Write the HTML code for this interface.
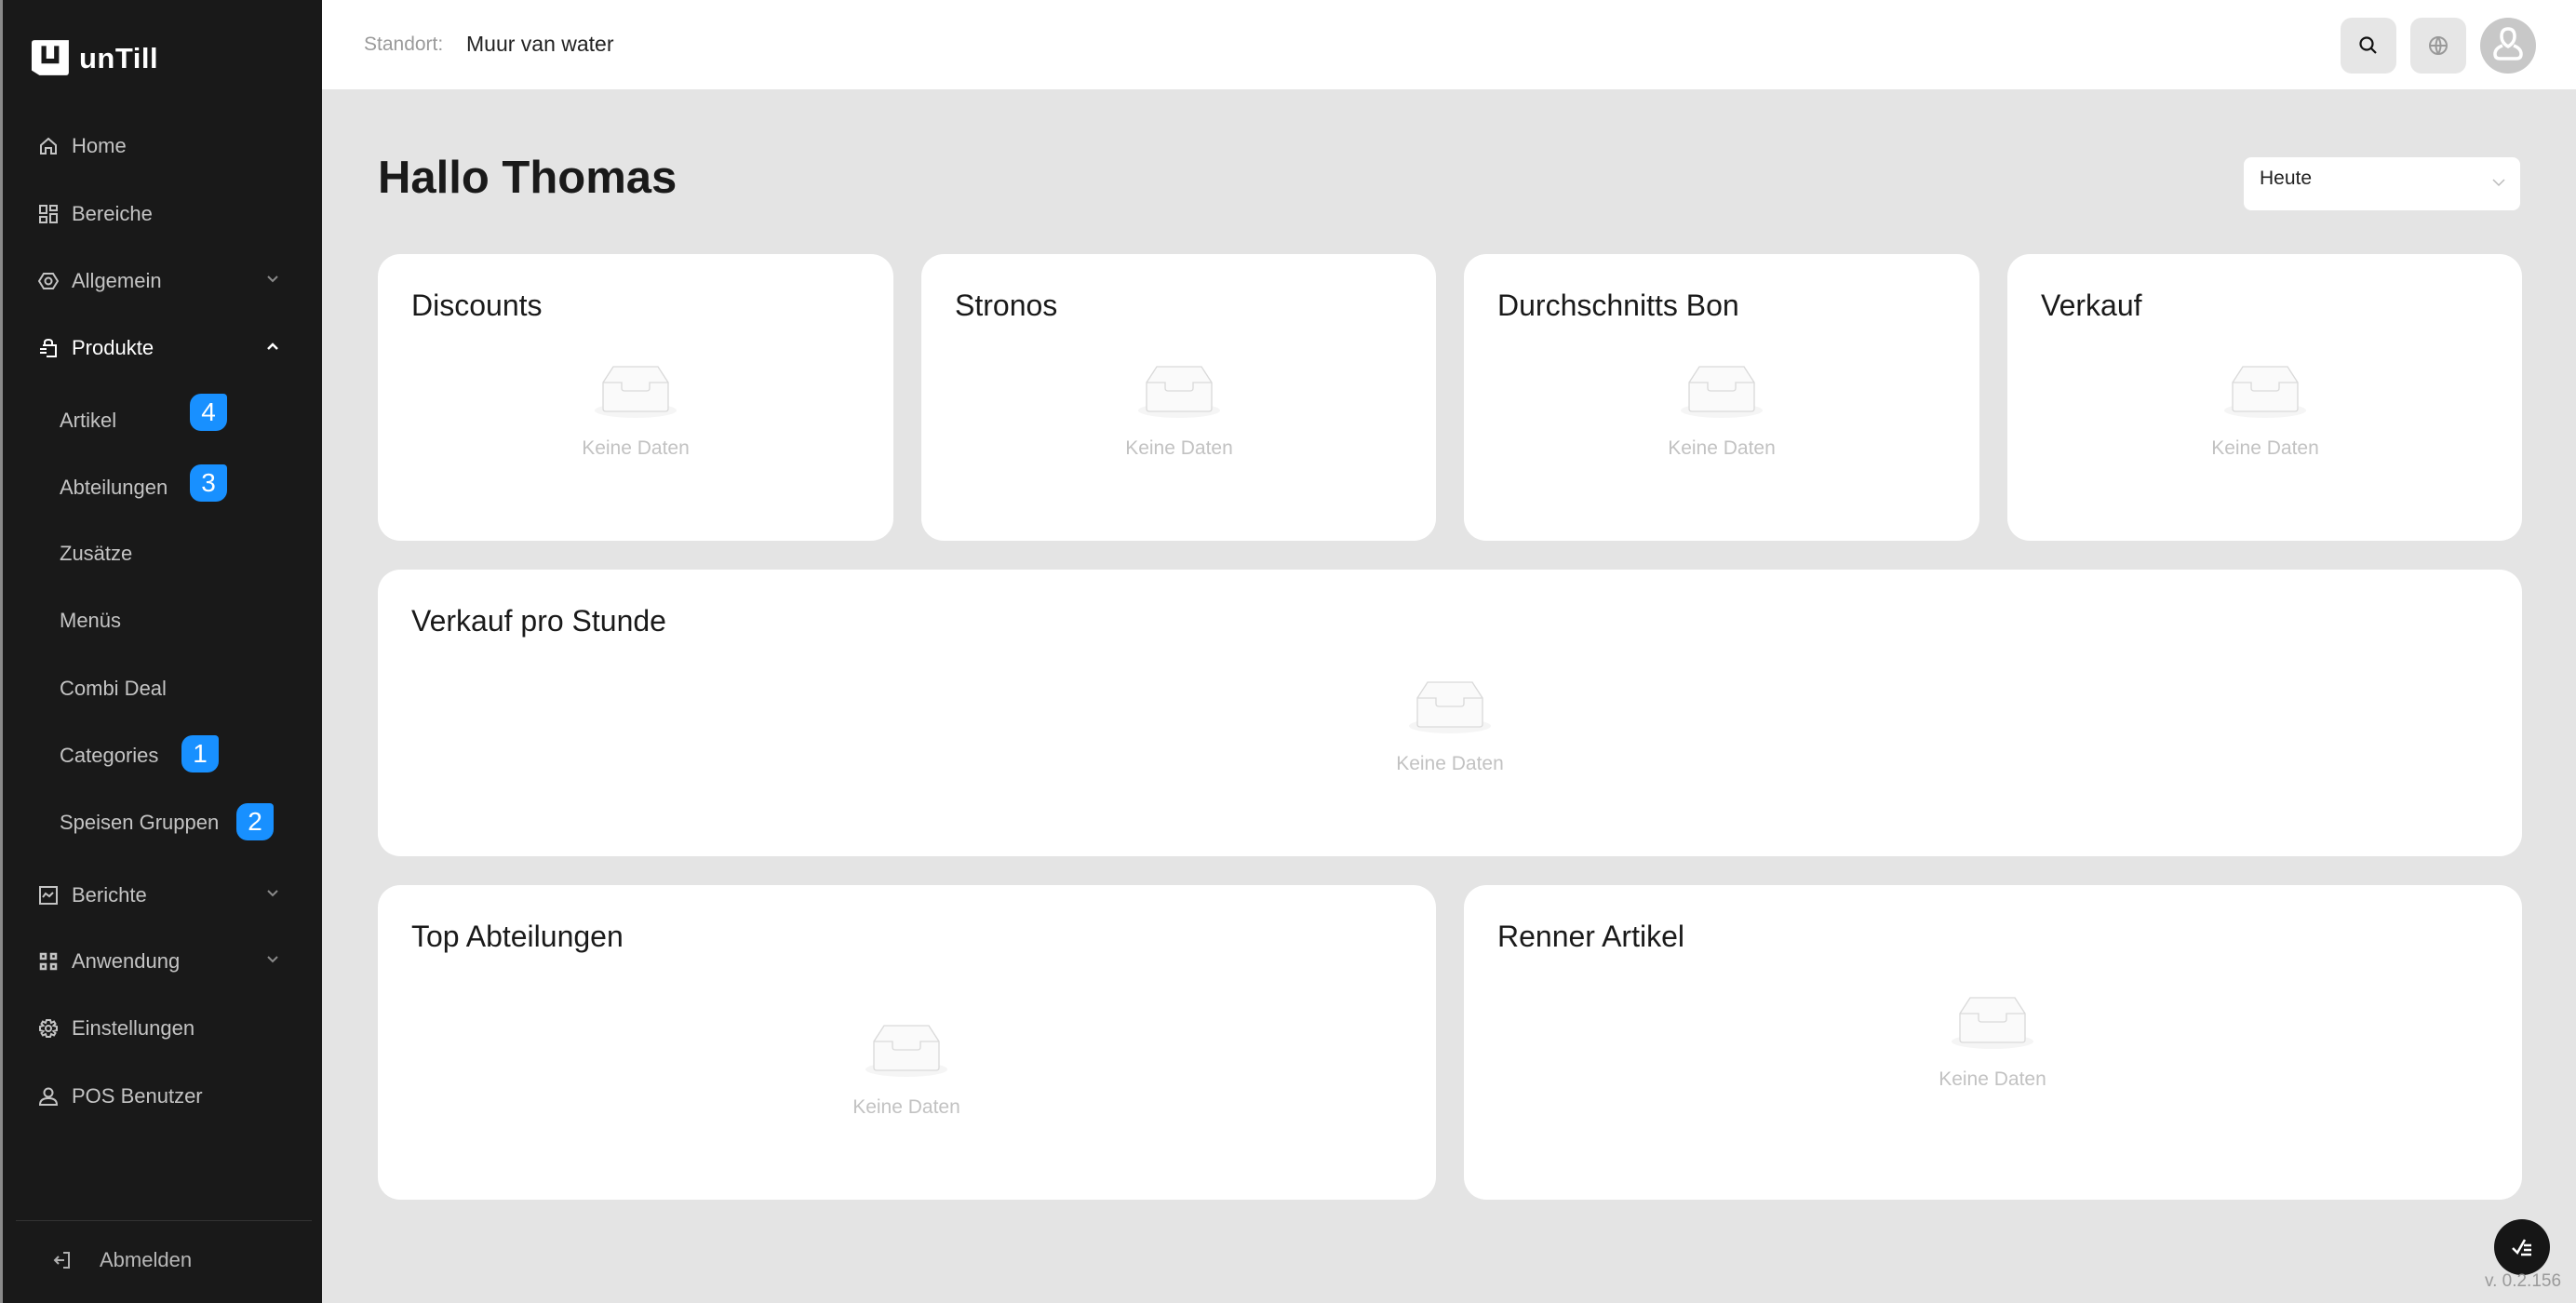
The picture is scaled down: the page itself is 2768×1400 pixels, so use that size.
<!DOCTYPE html>
<html><head><meta charset="utf-8"><style>
*{margin:0;padding:0;box-sizing:border-box}
body{width:2768px;height:1400px;background:#e4e4e4;font-family:"Liberation Sans",sans-serif;position:relative;overflow:hidden}
.sb{position:absolute;left:0;top:0;width:346px;height:1400px;background:#191919;border-left:3px solid #8a8a8a}
.it{position:absolute;left:0;width:346px;color:#c4c4c4;font-size:22px;line-height:30px}
.it svg{position:absolute;left:38px;top:4px}
.it .t{position:absolute;left:74px;top:0;white-space:nowrap}
.it.sub .t{left:61px}
.it svg.chev{position:absolute;left:281px;top:4px}
.badge{position:absolute;width:40px;height:40px;background:#1890ff;color:#fff;font-size:28px;line-height:40px;text-align:center;border-radius:12px 4px 12px 12px}
.hdr{position:absolute;left:346px;top:0;right:0;height:96px;background:#fff}
.card{position:absolute;background:#fff;border-radius:24px}
.card h3{position:absolute;left:36px;top:37px;font-size:32px;font-weight:normal;color:#1a1a1a}
.empty{position:absolute;width:200px;margin-left:-100px;text-align:center}
.empty span{display:block;color:#c2c2c2;font-size:21px;margin-top:14px}
.hb{position:absolute;top:19px;width:60px;height:60px;border-radius:12px;background:#e6e6e6}
</style></head><body>
<div class="sb">
 <div style="position:absolute;left:31px;top:43px">
  <svg width="42" height="39" viewBox="0 0 40 37"><path d="M3 0H38V33Q38 36 35 36H8L0 31V3Q0 0 3 0Z" fill="#fff"/><path d="M10 6V24H28V6H23V19H15V6Z" fill="#191919"/></svg>
 </div>
 <div style="position:absolute;left:82px;top:45px;color:#fff;font-size:31px;font-weight:bold;letter-spacing:0.5px">unTill</div>

 <div class="it" style="top:142px"><svg width="22" height="22" viewBox="0 0 22 22" fill="none" stroke="#c4c4c4" stroke-width="2"><path d="M3 10L11 3L19 10V19H14V13H8V19H3Z"/></svg><span class="t">Home</span></div>
 <div class="it" style="top:215px"><svg width="22" height="22" viewBox="0 0 22 22" fill="none" stroke="#c4c4c4" stroke-width="2"><rect x="2" y="2" width="7" height="8"/><rect x="13" y="2" width="7" height="5"/><rect x="2" y="14" width="7" height="6"/><rect x="13" y="11" width="7" height="9"/></svg><span class="t">Bereiche</span></div>
 <div class="it" style="top:287px"><svg width="22" height="22" viewBox="0 0 22 22" fill="none" stroke="#c4c4c4" stroke-width="2"><path d="M6 3H16L21 11L16 19H6L1 11Z"/><circle cx="11" cy="11" r="3.5"/></svg><span class="t">Allgemein</span><svg class="chev" width="18" height="18" viewBox="0 0 18 18" fill="none" stroke="#8a8a8a" stroke-width="2"><path d="M4 6L9 11L14 6"/></svg></div>
 <div class="it" style="top:359px;color:#fff"><svg width="22" height="22" viewBox="0 0 22 22" fill="none" stroke="#fff" stroke-width="2"><path d="M7 8V5Q7 2 11 2Q15 2 15 5V8"/><path d="M5 8H19V20H9"/><path d="M2 12H9M2 16H9"/></svg><span class="t">Produkte</span><svg class="chev" width="18" height="18" viewBox="0 0 18 18" fill="none" stroke="#fff" stroke-width="2.5"><path d="M4 12L9 7L14 12"/></svg></div>

 <div class="it sub" style="top:437px"><span class="t">Artikel</span></div>
 <div class="badge" style="left:201px;top:423px">4</div>
 <div class="it sub" style="top:509px"><span class="t">Abteilungen</span></div>
 <div class="badge" style="left:201px;top:499px">3</div>
 <div class="it sub" style="top:580px"><span class="t">Zusätze</span></div>
 <div class="it sub" style="top:652px"><span class="t">Menüs</span></div>
 <div class="it sub" style="top:725px"><span class="t">Combi Deal</span></div>
 <div class="it sub" style="top:797px"><span class="t">Categories</span></div>
 <div class="badge" style="left:192px;top:790px">1</div>
 <div class="it sub" style="top:869px"><span class="t">Speisen Gruppen</span></div>
 <div class="badge" style="left:251px;top:863px">2</div>

 <div class="it" style="top:947px"><svg width="22" height="22" viewBox="0 0 22 22" fill="none" stroke="#c4c4c4" stroke-width="2"><rect x="2" y="2" width="18" height="18"/><path d="M5 13L8 9L12 12L16 8"/></svg><span class="t">Berichte</span><svg class="chev" width="18" height="18" viewBox="0 0 18 18" fill="none" stroke="#8a8a8a" stroke-width="2"><path d="M4 6L9 11L14 6"/></svg></div>
 <div class="it" style="top:1018px"><svg width="22" height="22" viewBox="0 0 22 22" fill="none" stroke="#c4c4c4" stroke-width="2.5"><rect x="3" y="3" width="5" height="5"/><rect x="14" y="3" width="5" height="5"/><rect x="3" y="14" width="5" height="5"/><rect x="14" y="14" width="5" height="5"/></svg><span class="t">Anwendung</span><svg class="chev" width="18" height="18" viewBox="0 0 18 18" fill="none" stroke="#8a8a8a" stroke-width="2"><path d="M4 6L9 11L14 6"/></svg></div>
 <div class="it" style="top:1090px"><svg width="22" height="22" viewBox="0 0 22 22" fill="none" stroke="#c4c4c4" stroke-width="2"><circle cx="11" cy="11" r="3"/><path d="M9 2H13L14 5L17 3.5L18.5 6L16.5 8L20 9V13L16.5 14L18.5 16L17 18.5L14 17L13 20H9L8 17L5 18.5L3.5 16L5.5 14L2 13V9L5.5 8L3.5 6L5 3.5L8 5Z"/></svg><span class="t">Einstellungen</span></div>
 <div class="it" style="top:1163px"><svg width="22" height="22" viewBox="0 0 22 22" fill="none" stroke="#c4c4c4" stroke-width="2"><circle cx="11" cy="7" r="4.5"/><path d="M2 20Q2 13 11 13Q20 13 20 20Z"/></svg><span class="t">POS Benutzer</span></div>

 <div style="position:absolute;left:14px;top:1311px;width:318px;height:1px;background:#333"></div>
 <div class="it" style="top:1339px"><svg style="left:53px" width="22" height="22" viewBox="0 0 22 22" fill="none" stroke="#b0b0b0" stroke-width="2"><path d="M12 3H18V19H12"/><path d="M3 11H13M7 7L3 11L7 15"/></svg><span class="t" style="left:104px;color:#b8b8b8">Abmelden</span></div>
</div>

<div class="hdr">
 <span style="position:absolute;left:45px;top:36px;font-size:21px;color:#9a9a9a">Standort:</span>
 <span style="position:absolute;left:155px;top:34px;font-size:23px;color:#222">Muur van water</span>
</div>
<div class="hb" style="left:2515px"><svg style="position:absolute;left:18px;top:18px" width="24" height="24" viewBox="0 0 24 24" fill="none" stroke="#111" stroke-width="2.2"><circle cx="10" cy="10" r="6.5"/><path d="M15 15L20 20"/></svg></div>
<div class="hb" style="left:2590px"><svg style="position:absolute;left:18px;top:18px" width="24" height="24" viewBox="0 0 24 24" fill="none" stroke="#999" stroke-width="2"><circle cx="12" cy="12" r="9"/><path d="M3 12H21M12 3Q7 12 12 21M12 3Q17 12 12 21"/></svg></div>
<div style="position:absolute;left:2665px;top:19px;width:60px;height:60px;border-radius:50%;background:#c8c8c8"><svg style="position:absolute;left:13px;top:9px" width="34" height="40" viewBox="0 0 34 40" fill="none" stroke="#fff" stroke-width="3.5"><path d="M17 3Q24 3 24 11Q24 18 17 22Q10 18 10 11Q10 3 17 3Z"/><path d="M11 21Q3 24 3 30Q3 35 8 35H26Q31 35 31 30Q31 24 23 21"/></svg></div>

<div style="position:absolute;left:406px;top:163px;font-size:49px;font-weight:bold;color:#1a1a1a">Hallo Thomas</div>
<div style="position:absolute;left:2411px;top:169px;width:297px;height:57px;background:#fff;border-radius:8px">
 <span style="position:absolute;left:17px;top:11px;font-size:21px;color:#222">Heute</span>
 <svg style="position:absolute;left:265px;top:18px" width="18" height="18" viewBox="0 0 18 18" fill="none" stroke="#bbb" stroke-width="1.5"><path d="M3 6L9 12L15 6"/></svg>
</div>

<svg width="0" height="0" style="position:absolute"><defs><g id="box"><ellipse cx="48" cy="50" rx="44" ry="8" fill="#f5f5f5"/><path d="M24 3H72L83 20V48Q83 51 80 51H16Q13 51 13 48V20Z" fill="#fafafa" stroke="#d9d9d9" stroke-width="1.3"/><path d="M13 20H33V26Q33 29 36 29H60Q63 29 63 26V20H83" fill="none" stroke="#d9d9d9" stroke-width="1.3"/></g></defs></svg>

<div class="card" style="left:406px;top:273px;width:554px;height:308px"><h3>Discounts</h3><div class="empty" style="left:277px;top:118px"><svg width="96" height="60"><use href="#box"/></svg><span>Keine Daten</span></div></div>
<div class="card" style="left:990px;top:273px;width:553px;height:308px"><h3>Stronos</h3><div class="empty" style="left:277px;top:118px"><svg width="96" height="60"><use href="#box"/></svg><span>Keine Daten</span></div></div>
<div class="card" style="left:1573px;top:273px;width:554px;height:308px"><h3>Durchschnitts Bon</h3><div class="empty" style="left:277px;top:118px"><svg width="96" height="60"><use href="#box"/></svg><span>Keine Daten</span></div></div>
<div class="card" style="left:2157px;top:273px;width:553px;height:308px"><h3>Verkauf</h3><div class="empty" style="left:277px;top:118px"><svg width="96" height="60"><use href="#box"/></svg><span>Keine Daten</span></div></div>

<div class="card" style="left:406px;top:612px;width:2304px;height:308px"><h3>Verkauf pro Stunde</h3><div class="empty" style="left:1152px;top:118px"><svg width="96" height="60"><use href="#box"/></svg><span>Keine Daten</span></div></div>

<div class="card" style="left:406px;top:951px;width:1137px;height:338px"><h3>Top Abteilungen</h3><div class="empty" style="left:568px;top:148px"><svg width="96" height="60"><use href="#box"/></svg><span>Keine Daten</span></div></div>
<div class="card" style="left:1573px;top:951px;width:1137px;height:338px"><h3>Renner Artikel</h3><div class="empty" style="left:568px;top:118px"><svg width="96" height="60"><use href="#box"/></svg><span>Keine Daten</span></div></div>

<div style="position:absolute;left:2680px;top:1310px;width:60px;height:60px;border-radius:50%;background:#161616"><svg style="position:absolute;left:17px;top:17px" width="26" height="26" viewBox="0 0 26 26" fill="none" stroke="#fff" stroke-width="2.5"><path d="M3 14L8 19L16 5"/><path d="M15 11H23M15 16H23M12 21H23"/></svg></div>
<div style="position:absolute;left:2670px;top:1366px;font-size:19px;color:#9a9a9a">v. 0.2.156</div>
</body></html>
